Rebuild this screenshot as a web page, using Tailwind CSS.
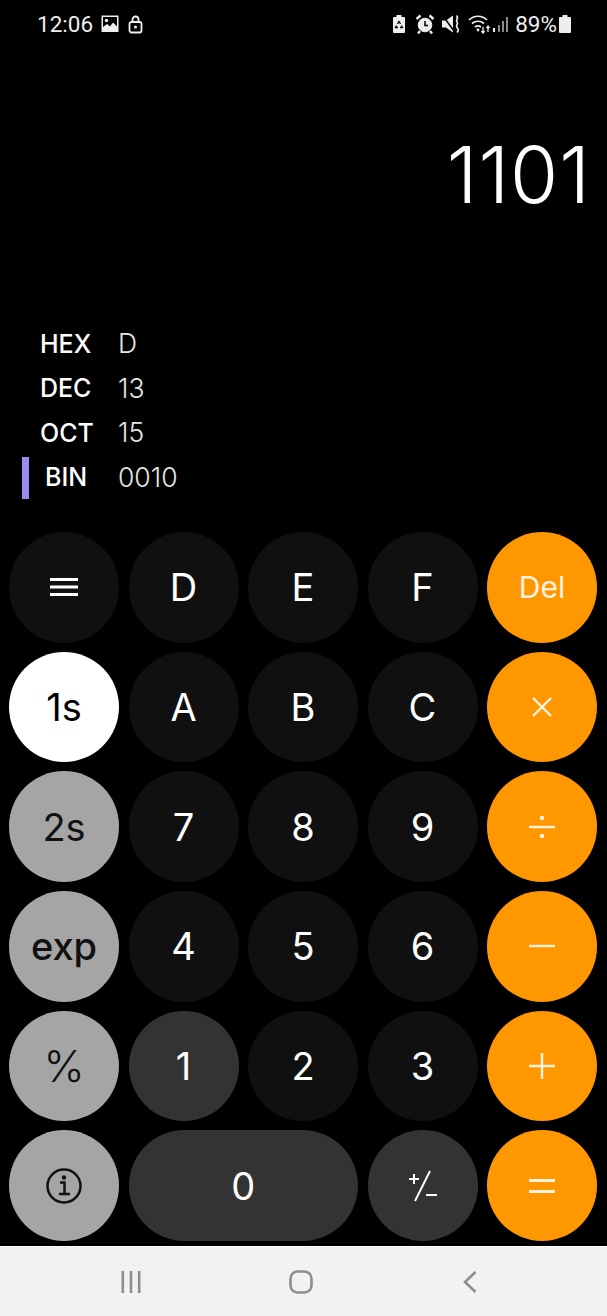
<!DOCTYPE html>
<html lang="en">
<head>
  <meta charset="UTF-8">
  <meta name="viewport" content="width=device-width, initial-scale=1.0">
  <title>Calculator</title>
  <script src="https://cdn.jsdelivr.net/npm/@tailwindcss/browser@4"></script>
</head>
<body class="bg-black font-['Inter',sans-serif] text-white">
  <div class="w-[607px] h-[1316px] flex flex-col overflow-hidden bg-black">
    <!-- status bar -->
    <div class="h-[48px] flex items-center justify-between pl-[37px] pr-[36px] text-[#eeeeee] shrink-0">
      <div class="flex items-center">
        <span class="font-['Roboto',sans-serif] text-[22.500px] leading-none">12:06</span>
        <svg class="ml-[8px]" width="18" height="18" viewBox="0 0 18 18"><path fill="#eee" fill-rule="evenodd" d="M.5.5h17v16.500H.5zM2 2v10l4-3 3 2.500 3-4 4 4V2z"/><circle cx="5.500" cy="5.500" r="1.700" fill="#eee"/></svg>
        <svg class="ml-[9px]" width="15" height="19" viewBox="0 0 15 19" fill="none" stroke="#eee" stroke-width="1.800"><rect x="1.500" y="7" width="12" height="10.500" rx="2"/><path d="M4.500 7V4.500a3 3 0 0 1 6 0V7"/><circle cx="7.500" cy="12" r="1.500" fill="#eee" stroke="none"/></svg>
      </div>
      <div class="flex items-center">
        <svg width="14" height="18" viewBox="0 0 14 18"><path fill="#eee" d="M4.500 0h5v2H12a1 1 0 0 1 1 1v14a1 1 0 0 1-1 1H2a1 1 0 0 1-1-1V3a1 1 0 0 1 1-1h2.500z"/><path fill="none" stroke="#000" stroke-width="1.300" d="M5.500 9L7 6.500 8.500 9M9.500 10.500l1 2H8M6 12.500H3.500l1-2"/></svg>
        <svg class="ml-[9px]" width="20" height="20" viewBox="0 0 20 20" fill="none" stroke="#eee"><circle cx="10" cy="11" r="6.800" fill="#eee"/><path stroke="#000" stroke-width="1.500" d="M10 7v4.500h3"/><path stroke-width="2.400" d="M1.500 5l4-3.500M18.500 5l-4-3.500M5 17l-2 2.500M15 17l2 2.500"/></svg>
        <svg class="ml-[7px]" width="19" height="20" viewBox="0 0 19 20"><path fill="#eee" d="M0 6.500h4l7-5v17l-7-5H0z"/><path stroke="#000" stroke-width="1.500" d="M1 2l11 15"/><path fill="none" stroke="#eee" stroke-width="1.700" d="M14.500 1.500c3 3-1.500 4 .5 6.500s-2 3 0 5.500 1.500 3 0 5"/></svg>
        <svg class="ml-[7px]" width="24" height="20" viewBox="0 0 24 20" fill="none" stroke="#eee" stroke-width="1.700"><path d="M1 6c5-5 13-5 18 0M4 9.500c3.500-3 8.500-3 12 0M7 13c2-1.500 4-1.500 6 0"/><circle cx="10" cy="16" r="1.400" fill="#eee" stroke="none"/><path stroke-width="1.300" d="M15 13v6M13.500 17l1.500 2 1.500-2M20 18v-6M18.500 14l1.500-2 1.500 2"/></svg>
        <svg class="ml-[0px]" width="18" height="20" viewBox="0 0 18 20"><path fill="#eee" d="M1 14h2v4H1z"/><path fill="#8a8a8a" d="M6 11h2v7H6zM10 7h2v11h-2zM14 3h2v15h-2z"/></svg>
        <span class="ml-[5px] font-['Roboto',sans-serif] text-[22.500px] leading-none">89%</span>
        <svg class="ml-[2px]" width="12" height="18" viewBox="0 0 12 18"><path fill="#eee" d="M3.500 0h5v2H11a1 1 0 0 1 1 1v14a1 1 0 0 1-1 1H1a1 1 0 0 1-1-1V3a1 1 0 0 1 1-1h2.500z"/></svg>
      </div>
    </div>

    <!-- display -->
    <div class="h-[274px] shrink-0 pr-[16px] pt-[79px] flex justify-end">
      <span class="text-[78px] leading-[96px] font-light tracking-[1px]">1101</span>
    </div>

    <!-- base list -->
    <div class="h-[210px] shrink-0 pl-[22px] flex flex-col">
      <div class="flex items-center h-[44.500px]"><span class="w-[96px] pl-[18px] text-[25px] font-medium">HEX</span><span class="text-[26.500px] font-light text-[#e5e5e5]">D</span></div>
      <div class="flex items-center h-[44.500px]"><span class="w-[96px] pl-[18px] text-[25px] font-medium">DEC</span><span class="text-[26.500px] font-light text-[#e5e5e5]">13</span></div>
      <div class="flex items-center h-[44.500px]"><span class="w-[96px] pl-[18px] text-[25px] font-medium">OCT</span><span class="text-[26.500px] font-light text-[#e5e5e5]">15</span></div>
      <div class="flex items-center h-[44.500px]">
        <span class="w-[7px] h-[42px] bg-[#9d8cf0]"></span>
        <span class="w-[89px] pl-[16px] text-[25px] font-medium">BIN</span><span class="text-[26.500px] font-light text-[#e5e5e5]">0010</span>
      </div>
    </div>

    <!-- keypad -->
    <div class="grid grid-cols-[repeat(5,110px)] auto-rows-[110.500px] gap-x-[9.500px] gap-y-[9.200px] pl-[9px] text-[38px] leading-none shrink-0">
      <button class="rounded-full bg-[#101010] flex items-center justify-center">
        <svg width="28" height="20" viewBox="0 0 28 20" fill="#fff"><path d="M0 1h28v3H0zM0 8.500h28v3H0zM0 16h28v3H0z"/></svg>
      </button>
      <button class="rounded-full bg-[#101010] font-normal">D</button>
      <button class="rounded-full bg-[#101010]">E</button>
      <button class="rounded-full bg-[#101010]">F</button>
      <button class="rounded-full bg-[#ff9800] text-[30px] text-[#fff3e0]">Del</button>

      <button class="rounded-full bg-white text-black">1s</button>
      <button class="rounded-full bg-[#101010]">A</button>
      <button class="rounded-full bg-[#101010]">B</button>
      <button class="rounded-full bg-[#101010]">C</button>
      <button class="rounded-full bg-[#ff9800] flex items-center justify-center">
        <svg width="22" height="22" viewBox="0 0 22 22" stroke="#fff3e0" stroke-width="2.400"><path d="M2 2l18 18M20 2L2 20"/></svg>
      </button>

      <button class="rounded-full bg-[#a5a5a5] text-[#111111]">2s</button>
      <button class="rounded-full bg-[#101010]">7</button>
      <button class="rounded-full bg-[#101010]">8</button>
      <button class="rounded-full bg-[#101010]">9</button>
      <button class="rounded-full bg-[#ff9800] flex items-center justify-center">
        <svg width="26" height="24" viewBox="0 0 26 24" fill="#fff3e0"><path d="M0 10.800h26v2.400H0z"/><circle cx="13" cy="3" r="2.300"/><circle cx="13" cy="21" r="2.300"/></svg>
      </button>

      <button class="rounded-full bg-[#a5a5a5] text-[#111111] font-medium">exp</button>
      <button class="rounded-full bg-[#101010]">4</button>
      <button class="rounded-full bg-[#101010]">5</button>
      <button class="rounded-full bg-[#101010]">6</button>
      <button class="rounded-full bg-[#ff9800] flex items-center justify-center">
        <svg width="26" height="4" viewBox="0 0 26 4" fill="#fff3e0"><path d="M0 .8h26v2.400H0z"/></svg>
      </button>

      <button class="rounded-full bg-[#a5a5a5] text-[#111111]">
        <span class="font-light text-[44px]">%</span>
      </button>
      <button class="rounded-full bg-[#333333]">1</button>
      <button class="rounded-full bg-[#101010]">2</button>
      <button class="rounded-full bg-[#101010]">3</button>
      <button class="rounded-full bg-[#ff9800] flex items-center justify-center">
        <svg width="26" height="26" viewBox="0 0 26 26" fill="#fff3e0"><path d="M0 11.800h26v2.400H0zM11.800 0h2.400v26h-2.400z"/></svg>
      </button>

      <button class="rounded-full bg-[#a5a5a5] flex items-center justify-center">
        <svg width="38" height="38" viewBox="0 0 38 38" fill="none" stroke="#111" stroke-width="2.500"><circle cx="19" cy="19" r="16.500"/><circle cx="19" cy="10.500" r="2.200" fill="#111" stroke="none"/><path d="M15 15.500h4.500V26M14 27h11"/></svg>
      </button>
      <button class="col-span-2 rounded-full bg-[#333333]">0</button>
      <button class="rounded-full bg-[#333333] flex items-center justify-center">
        <svg width="28" height="32" viewBox="0 0 28 32" stroke="#fff" fill="none"><path stroke-width="2" d="M21 1L6 31"/><path stroke-width="2" d="M0 9h10M5 4v10M17 25h11"/></svg>
      </button>
      <button class="rounded-full bg-[#ff9800] flex items-center justify-center">
        <svg width="26" height="16" viewBox="0 0 26 16" fill="#fff3e0"><path d="M0 1h26v3H0zM0 12h26v3H0z"/></svg>
      </button>
    </div>

    <div class="flex-1"></div>

    <!-- nav bar -->
    <div class="h-[70px] shrink-0 bg-[#f2f2f2] border-t border-white flex items-center">
      <div class="flex-1 flex justify-center">
        <svg class="ml-[-42px]" width="22" height="24" viewBox="0 0 22 24" fill="#8e8e8e"><path d="M1.500 1h2.600v22H1.500zM9.700 1h2.600v22H9.700zM17.900 1h2.600v22h-2.600z"/></svg>
      </div>
      <svg class="absolute left-[289px]" width="24" height="24" viewBox="0 0 24 24" fill="none" stroke="#8e8e8e" stroke-width="2.600"><rect x="1.500" y="1.500" width="21" height="21" rx="7"/></svg>
      <div class="flex-1 flex justify-center">
        <svg class="ml-[30px]" width="14" height="24" viewBox="0 0 14 24" fill="none" stroke="#8e8e8e" stroke-width="2.600"><path d="M12.500 2L2 12l10.500 10"/></svg>
      </div>
    </div>
  </div>
</body>
</html>
